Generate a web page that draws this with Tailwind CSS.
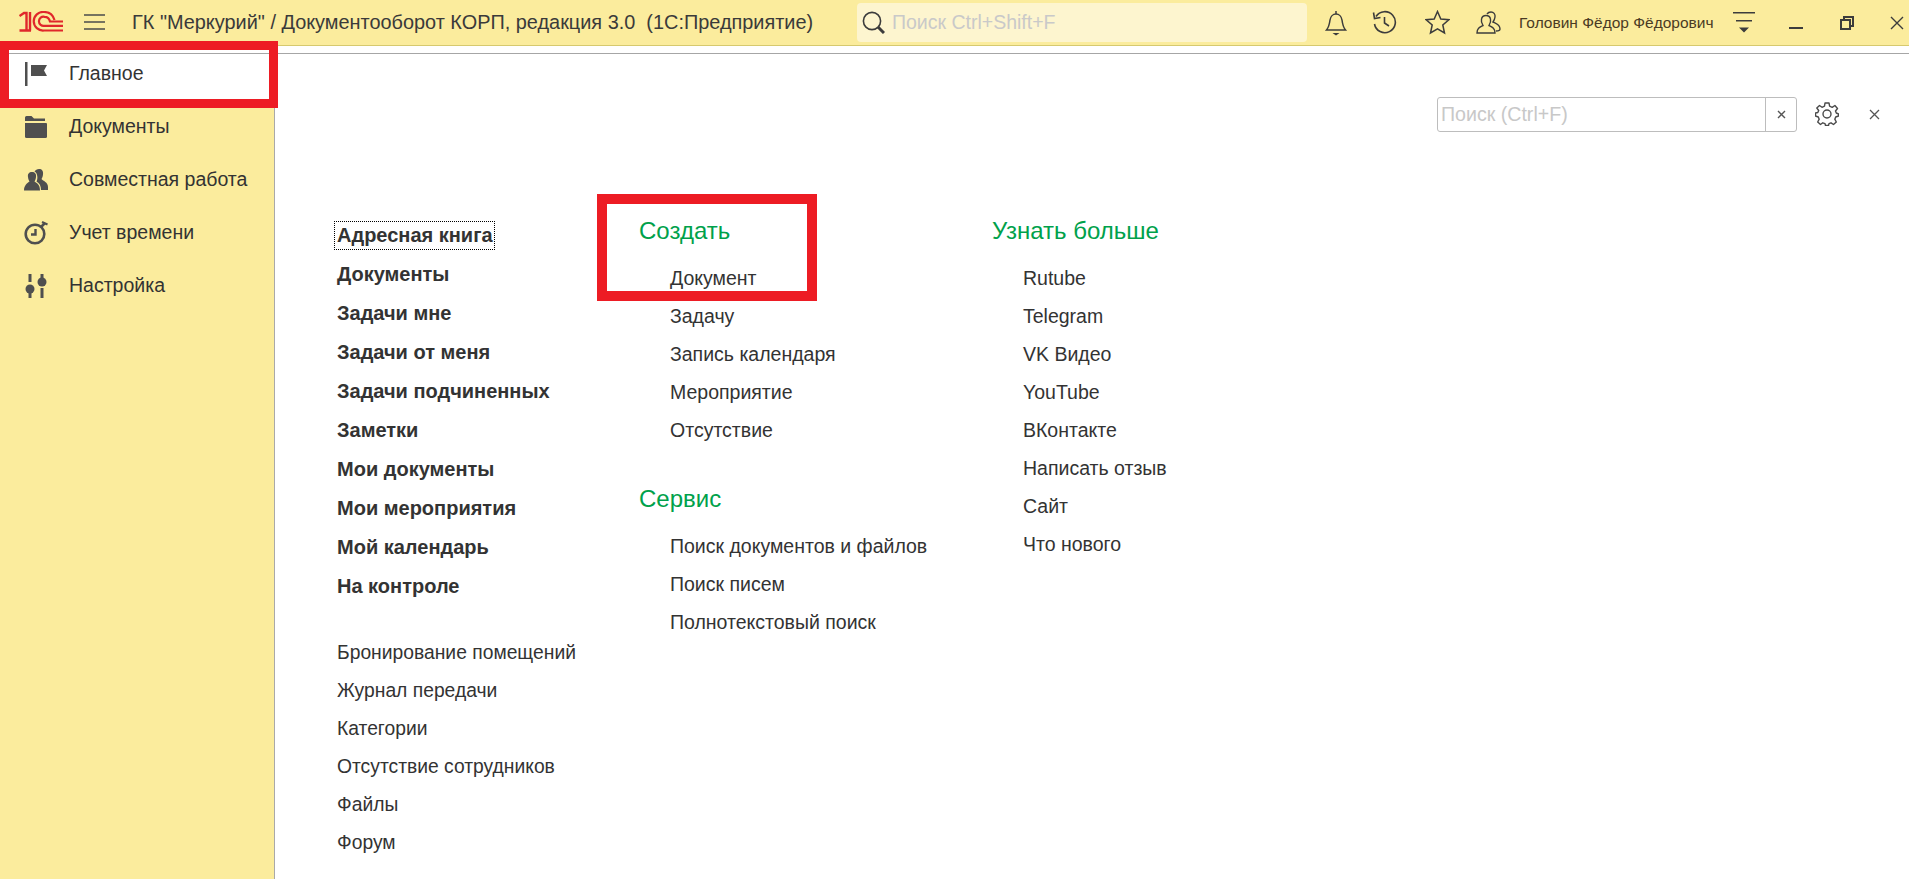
<!DOCTYPE html>
<html lang="ru">
<head>
<meta charset="utf-8">
<script src="https://cdn.jsdelivr.net/npm/@tailwindcss/browser@4"></script>
</head>
<body class="bg-white overflow-hidden">
<div class="relative w-[1909px] h-[879px] flex flex-col font-['Liberation_Sans',Arial,sans-serif] text-[#333]">
  <!-- header -->
  <header class="h-[46px] shrink-0 bg-[#fbec9d] border-b border-[#d6c96f] flex items-center">
    <svg class="ml-[19px] mb-[3px] w-[45px] h-[21px] shrink-0" viewBox="0 0 45 21" fill="none" stroke="#e0272b" stroke-width="2.200">
      <path d="M0.500 5 L5 2 H7.500 V19.500 M0.500 19.500 H12 M11 1 V19.500" stroke-width="2.400"/>
      <path d="M44 19.500 H25 A9.300 9.300 0 1 1 25 1 C31 1 34 4 35.500 9"/>
      <path d="M44 14.800 H25.500 A4.600 4.600 0 1 1 25.500 5.800 C29 5.800 30.500 8 31 10.500 H44"/>
    </svg>
    <svg class="ml-[19px] mb-[2px] w-[23px] h-[18px] shrink-0" viewBox="0 0 23 18" stroke="#4b4b4b" stroke-width="1.600"><path d="M1 2H22M1 9H22M1 16H22"/></svg>
    <div class="ml-[26px] w-[725px] text-[19.9px] leading-none text-[#3a3a3a] whitespace-nowrap">ГК "Меркурий" / Документооборот КОРП, редакция 3.0&nbsp; (1С:Предприятие)</div>
    <div class="w-[450px] h-[39px] rounded-[4px] bg-[#fdf5cf] flex items-center shrink-0">
      <svg class="ml-[5px] w-[23px] h-[23px]" viewBox="0 0 23 23" fill="none" stroke="#3c3c3c" stroke-width="1.600"><circle cx="10" cy="10" r="8.600"/><path d="M16 16 L22 22" stroke-width="3"/></svg>
      <span class="ml-[7px] text-[19.5px] text-[#c9c9c9] whitespace-nowrap">Поиск Ctrl+Shift+F</span>
    </div>
    <svg class="ml-[17px] w-[24px] h-[26px] shrink-0" viewBox="0 0 24 26" fill="none" stroke="#3c3c3c" stroke-width="1.500"><path d="M2.500 20 C5 17 5.500 14 6 10 C6.500 6.500 9 4 12 4 C15 4 17.500 6.500 18 10 C18.500 14 19 17 21.500 20 Z"/><path d="M12 1V4"/><path d="M8.500 23H15.500L12 25.500Z" fill="#3c3c3c" stroke="none"/></svg>
    <svg class="ml-[24px] w-[25px] h-[25px] shrink-0" viewBox="0 0 25 25" fill="none" stroke="#3c3c3c" stroke-width="1.600"><path d="M4 6.500 A10.500 10.500 0 1 1 2.500 14"/><path d="M1.500 2.500 L2.500 8.500 L8.500 7.500"/><path d="M12.500 7V13L17 16"/></svg>
    <svg class="ml-[28px] w-[25px] h-[25px] shrink-0" viewBox="0 0 25 25" fill="none" stroke="#3c3c3c" stroke-width="1.500"><path d="M12.500 1.500 L15.800 9 L23.800 9.700 L17.800 15 L19.500 23 L12.500 18.800 L5.500 23 L7.200 15 L1.200 9.700 L9.200 9 Z"/></svg>
    <svg class="ml-[26px] w-[25px] h-[23px] shrink-0" viewBox="0 0 25 23" fill="none" stroke="#3c3c3c" stroke-width="1.400"><path d="M1 22 C1 17 4 16 7 14.500 C5.500 12 5 10 5.500 8 C6 5.500 8 4.500 10 4.500 C12 4.500 14 5.500 14.500 8 C15 10 14.500 12 13 14.500 C16 16 19 17 19 22 Z"/><path d="M11 3 C12 1.500 13.500 1 15 1 C17.500 1 19.500 3 19 6 C18.800 8 18 9.500 17 11 C20 12.500 24 13.500 24 18 C24 19.500 23 20 20 20"/></svg>
    <span class="ml-[18px] text-[15.5px] text-[#4a3b24] whitespace-nowrap w-[214px] shrink-0">Головин Фёдор Фёдорович</span>
    <svg class="w-[22px] h-[23px] shrink-0" viewBox="0 0 22 23" fill="#3c3c3c"><path d="M0 1H22V2.500H0ZM3 9H19V10.500H3ZM6 16.500H16L11 21.500Z"/></svg>
    <div class="ml-[34px] w-[14px] h-[2px] bg-[#3c3c3c] mt-[11px] shrink-0"></div>
    <svg class="ml-[37px] w-[14px] h-[14px] shrink-0" viewBox="0 0 14 14" fill="none" stroke="#3c3c3c" stroke-width="2"><rect x="1" y="4" width="9" height="9"/><path d="M4 4V1H13V10H10"/></svg>
    <svg class="ml-[36px] w-[14px] h-[14px] shrink-0" viewBox="0 0 14 14" stroke="#3c3c3c" stroke-width="1.400"><path d="M1 1L13 13M13 1L1 13"/></svg>
  </header>
  <div class="h-[7px] shrink-0 bg-white border-b border-[#a6a6a6] box-content"></div>
  <!-- body -->
  <div class="flex-1 flex min-h-0">
    <nav class="w-[275px] shrink-0 bg-[#fbec9d] border-r border-[#a9a9a9] text-[19.5px] text-[#333]">
      <div class="h-[45px] pb-[5px] bg-white flex items-center">
        <svg class="ml-[25px] w-[22px] h-[24px] shrink-0" viewBox="0 0 22 24" fill="#4f4f4f"><rect x="0" y="0" width="2.500" height="24"/><path d="M6 3H22L19 8.500L22 14H6Z"/></svg>
        <span class="ml-[22px]">Главное</span>
      </div>
      <div class="h-[1px]"></div>
      <div class="h-[53px] flex items-center">
        <svg class="ml-[25px] w-[22px] h-[22px] shrink-0" viewBox="0 0 22 22" fill="#4f4f4f"><path d="M0 4V1.500Q0 0 1.500 0H6.500L9 2.500H20V5H0Z"/><path d="M0 7H21Q22 7 22 8V20.500Q22 22 20.500 22H1.500Q0 22 0 20.500Z"/></svg>
        <span class="ml-[22px]">Документы</span>
      </div>
      <div class="h-[53px] flex items-center">
        <svg class="ml-[24px] w-[24px] h-[22px] shrink-0" viewBox="0 0 24 22" fill="#4f4f4f"><path d="M15 0C18 0 19.500 2 19 5.500C18.800 7.500 18 9 17.500 10C19 12 24 13 24 18V21H17C17 17 15.500 14 12.500 12.500C14 10 13.800 4 10.500 2.500C11.500 1 13 0 15 0Z"/><path d="M8 3C11 3 12.500 5 12 8C11.800 10 11 11.500 10.500 12.500C12.500 14 16 15 16 21.500H0C0 16 3.500 14 5.500 12.500C5 11.500 4.200 10 4 8C3.500 5 5 3 8 3Z"/></svg>
        <span class="ml-[21px]">Совместная работа</span>
      </div>
      <div class="h-[53px] flex items-center">
        <svg class="ml-[24px] w-[24px] h-[24px] shrink-0" viewBox="0 0 24 24" fill="none" stroke="#4f4f4f"><circle cx="11" cy="13" r="9.300" stroke-width="2.600"/><path d="M11.500 8V13.500H7" stroke-width="2.400"/><path d="M17 6L21 2" stroke-width="2.500"/><path d="M18 1L23.500 3.500" stroke-width="2"/></svg>
        <span class="ml-[21px]">Учет времени</span>
      </div>
      <div class="h-[53px] flex items-center">
        <svg class="ml-[25px] w-[22px] h-[24px] shrink-0" viewBox="0 0 22 24" fill="#4f4f4f"><rect x="3.500" y="0" width="3" height="8"/><circle cx="5" cy="15" r="4.500"/><path d="M3.500 17H6.500V24H3.500Z"/><rect x="15.500" y="14" width="3" height="10"/><circle cx="17" cy="8" r="4.500"/><path d="M15.500 0H18.500V6H15.500Z"/></svg>
        <span class="ml-[22px]">Настройка</span>
      </div>
    </nav>
    <main class="flex-1 min-w-0 flex flex-col">
      <div class="h-[78px] shrink-0 flex items-end">
        <div class="ml-[1162px] w-[360px] h-[35px] border border-[#bdbdbd] rounded-[3px] flex">
          <div class="flex-1 flex items-center pl-[3px] text-[19.6px] text-[#c8c8c8]">Поиск (Ctrl+F)</div>
          <div class="w-[31px] border-l border-[#bdbdbd] flex items-center justify-center">
            <svg class="w-[9px] h-[9px]" viewBox="0 0 9 9" stroke="#555" stroke-width="1.400"><path d="M1 1L8 8M8 1L1 8"/></svg>
          </div>
        </div>
        <svg class="ml-[18px] mb-[6px] w-[24px] h-[24px]" viewBox="0 0 24 24" fill="none" stroke="#4a4a4a" stroke-width="1.400"><circle cx="12" cy="12" r="4"/><path d="M10 1H14L14.600 4.200L17.200 5.300L19.900 3.500L22.500 6.500L20.500 9L21.300 11L23.500 12V14L20.700 15L19.800 17.200L21.300 20L18.500 22.500L16 20.800L14 21.600L13.500 23.500H10.500L10 21.600L7.800 20.800L5.500 22.500L2.700 20L4.200 17.200L3.300 15L0.500 14V11L2.800 10.500L3.700 8.500L1.800 6L4.500 3.500L7 5.300L9.500 4.200Z" stroke-linejoin="round"/></svg>
        <svg class="ml-[30px] mb-[12px] w-[11px] h-[11px]" viewBox="0 0 11 11" stroke="#555" stroke-width="1.300"><path d="M1 1L10 10M10 1L1 10"/></svg>
      </div>
      <div class="flex pl-[62px] pt-[84px]">
        <div class="w-[302px] shrink-0 text-[19.3px] leading-[38px] text-[#333]">
          <div class="font-bold text-[20px] leading-[39px]">
            <div class="relative w-fit">Адресная книга<span class="absolute left-[-3px] right-[-2px] top-[5px] bottom-[5px] border border-dotted border-black"></span></div>
            <div>Документы</div>
            <div>Задачи мне</div>
            <div>Задачи от меня</div>
            <div>Задачи подчиненных</div>
            <div>Заметки</div>
            <div>Мои документы</div>
            <div>Мои мероприятия</div>
            <div>Мой календарь</div>
            <div>На контроле</div>
          </div>
          <div class="mt-[28px]">
            <div>Бронирование помещений</div>
            <div>Журнал передачи</div>
            <div>Категории</div>
            <div>Отсутствие сотрудников</div>
            <div>Файлы</div>
            <div>Форум</div>
          </div>
        </div>
        <div class="w-[353px] shrink-0 -mt-[4px] text-[19.5px] leading-[38px]">
          <div class="text-[24px] leading-[38px] text-[#00a14b]">Создать</div>
          <div class="pl-[31px] mt-[9px]">
            <div>Документ</div>
            <div>Задачу</div>
            <div>Запись календаря</div>
            <div>Мероприятие</div>
            <div>Отсутствие</div>
          </div>
          <div class="text-[24px] leading-[38px] text-[#00a14b] mt-[31px]">Сервис</div>
          <div class="pl-[31px] mt-[9px]">
            <div>Поиск документов и файлов</div>
            <div>Поиск писем</div>
            <div>Полнотекстовый поиск</div>
          </div>
        </div>
        <div class="shrink-0 -mt-[4px] text-[19.5px] leading-[38px]">
          <div class="text-[24px] leading-[38px] text-[#00a14b]">Узнать больше</div>
          <div class="pl-[31px] mt-[9px]">
            <div>Rutube</div>
            <div>Telegram</div>
            <div>VK Видео</div>
            <div>YouTube</div>
            <div>ВКонтакте</div>
            <div>Написать отзыв</div>
            <div>Сайт</div>
            <div>Что нового</div>
          </div>
        </div>
      </div>
    </main>
  </div>
  <!-- red annotation frames -->
  <div class="absolute left-0 top-[41px] w-[278px] h-[67px] border-[9px] border-[#ed1c24]"></div>
  <div class="absolute left-[597px] top-[194px] w-[220px] h-[107px] border-[10px] border-[#ed1c24]"></div>
</div>
</body>
</html>
